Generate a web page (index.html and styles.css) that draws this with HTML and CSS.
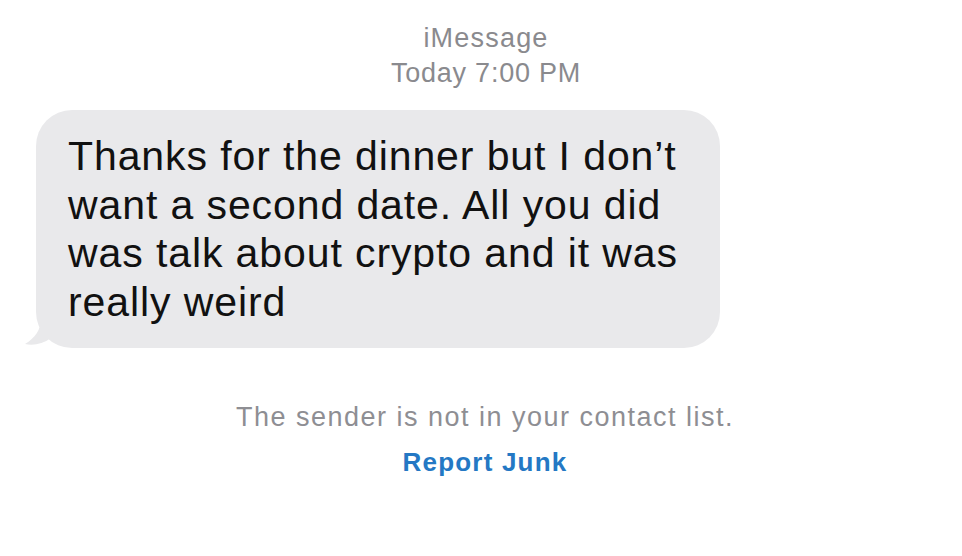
FILE: index.html
```html
<!DOCTYPE html>
<html>
<head>
<meta charset="utf-8">
<link rel="stylesheet" href="styles.css">
</head>
<body>
<div class="screen">
  <div class="header">
    <div class="service">iMessage</div>
    <div class="time">Today 7:00 PM</div>
  </div>
  <div class="row">
    <div class="bubble">
      <p class="msg">Thanks for the dinner but I don’t want a second date. All you did was talk about crypto and it was really weird</p>
      <svg class="tail" width="30" height="30" viewBox="0 0 30 30"><path d="M16 0 C16 12 10 20 0 26 C8 28 18 26 26 20 L30 0 Z" fill="#e9e9eb"/></svg>
    </div>
  </div>
  <div class="footer">
    <div class="note">The sender is not in your contact list.</div>
    <div class="junk">Report Junk</div>
  </div>
</div>
</body>
</html>
```
FILE: styles.css
```css
html, body {
  margin: 0;
  padding: 0;
  background: #ffffff;
}
.screen {
  width: 962px;
  height: 556px;
  overflow: hidden;
  font-family: "Liberation Sans", Arial, sans-serif;
  display: flex;
  flex-direction: column;
}
.header {
  display: flex;
  flex-direction: column;
  align-items: center;
  padding: 21px 0 0 10px;
  color: #8a8a8e;
  font-size: 27px;
  line-height: 35px;
}
.service {
  letter-spacing: 1.2px;
}
.time {
  letter-spacing: 0.75px;
}
.row {
  display: flex;
  padding: 19px 0 0 36px;
}
.bubble {
  position: relative;
  width: 684px;
  height: 238px;
  box-sizing: border-box;
  background: #e9e9eb;
  border-radius: 36px;
  padding: 22px 20px 0 32px;
}
.msg {
  margin: 0;
  font-size: 41px;
  line-height: 48.5px;
  color: #111111;
  letter-spacing: 0.9px;
}
.tail {
  position: absolute;
  left: -11px;
  bottom: 0;
}
.footer {
  display: flex;
  flex-direction: column;
  align-items: center;
  padding: 52px 0 0 8px;
}
.note {
  color: #8e8e93;
  font-size: 27px;
  line-height: 34px;
  letter-spacing: 1.5px;
}
.junk {
  margin-top: 11px;
  color: #2478c4;
  font-size: 26px;
  line-height: 34px;
  font-weight: bold;
  letter-spacing: 1.2px;
}
```
